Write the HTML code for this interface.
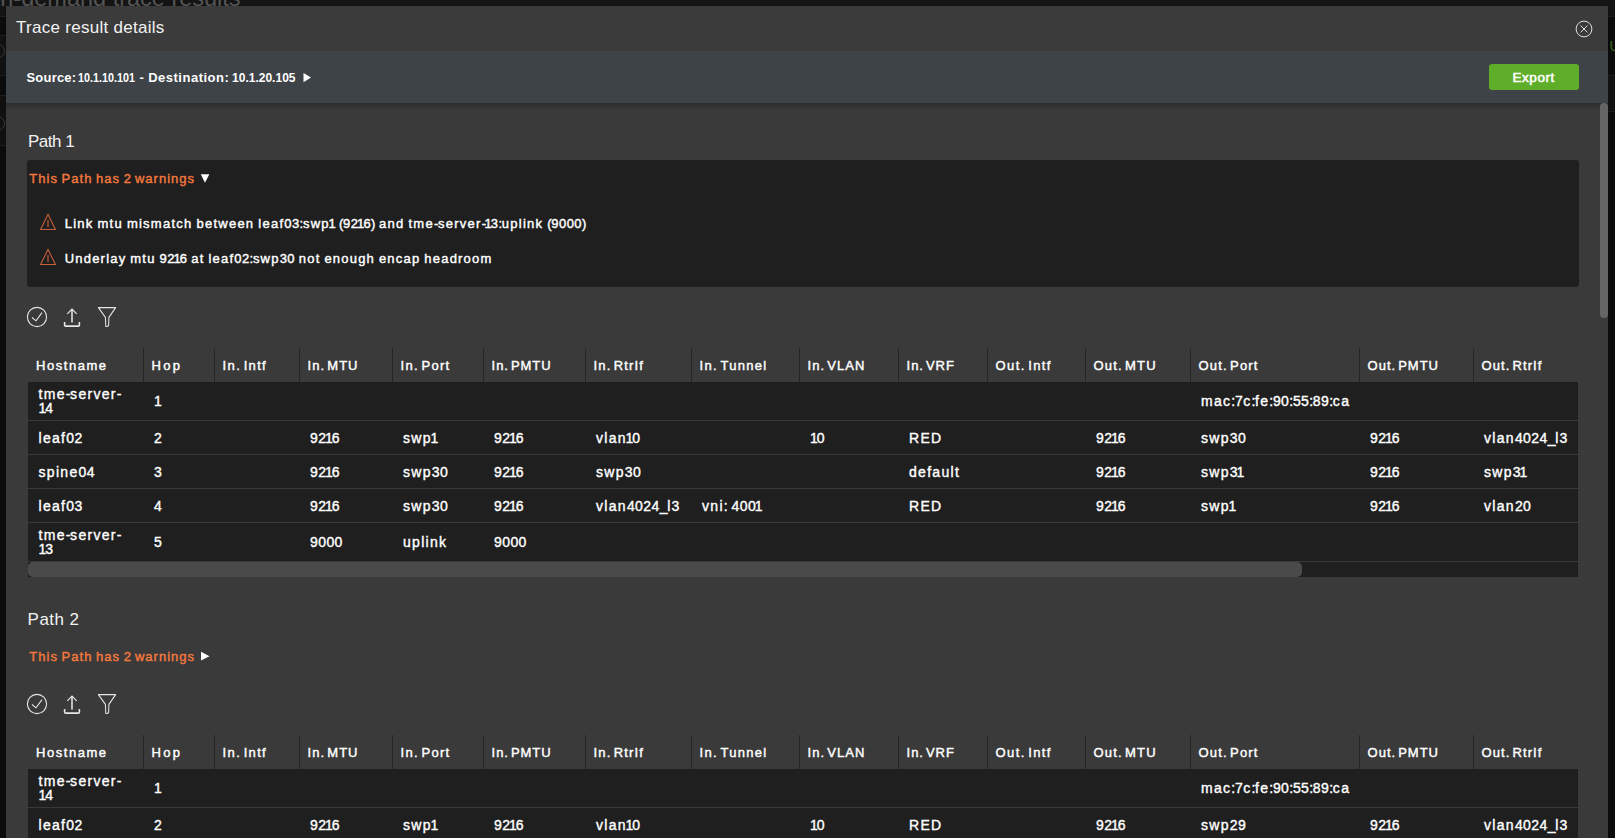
<!DOCTYPE html>
<html><head><meta charset="utf-8"><style>
html,body{margin:0;padding:0;}
body{width:1615px;height:838px;overflow:hidden;background:#0b0b0b;position:relative;font-family:"Liberation Sans",sans-serif;}
.r{position:absolute;}
.t{position:absolute;white-space:nowrap;font-family:"Liberation Sans",sans-serif;}
.clip{position:absolute;overflow:hidden;}
</style></head><body>
<div class="r" style="left:0px;top:0px;width:1615px;height:16px;background:#141414;"></div>
<div class="t" style="left:-18px;top:-13.39px;font-size:23.5px;line-height:23.5px;font-weight:400;color:#555555;">On-demand trace results</div>
<div class="r" style="left:0px;top:35px;width:6px;height:40px;background:#111111;"></div>
<div class="r" style="left:0px;top:95px;width:6px;height:50px;background:#101010;"></div>
<div class="r" style="left:0px;top:16px;width:6px;height:1px;background:#1e1e1e;"></div>
<div class="r" style="left:0px;top:35px;width:6px;height:1px;background:#1e1e1e;"></div>
<div class="r" style="left:0px;top:75px;width:6px;height:1px;background:#1e1e1e;"></div>
<div class="r" style="left:0px;top:95px;width:6px;height:1px;background:#1e1e1e;"></div>
<div class="r" style="left:0px;top:145px;width:6px;height:1px;background:#1e1e1e;"></div>
<div class="r" style="left:-9px;top:44px;width:12px;height:12px;border:1.5px solid #3a3a3a;border-radius:50%"></div>
<div class="r" style="left:-10px;top:116px;width:13px;height:13px;border:1.5px solid #3a3a3a;border-radius:50%"></div>
<div class="r" style="left:1608px;top:75px;width:7px;height:36px;background:#111111;"></div>
<div class="r" style="left:1608px;top:16px;width:7px;height:1px;background:#1e1e1e;"></div>
<div class="r" style="left:1608px;top:75px;width:7px;height:1px;background:#1e1e1e;"></div>
<div class="r" style="left:1608px;top:111px;width:7px;height:1px;background:#1e1e1e;"></div>
<div class="t" style="left:1609.5px;top:39.15px;font-size:14px;line-height:14px;font-weight:400;color:#356b1c;">U</div>
<div class="r" style="left:6px;top:6px;width:1602px;height:840px;background:#3a3a3a;"></div>
<div class="r" style="left:6px;top:6px;width:1602px;height:45px;background:#3b3b3b;box-shadow:0 1px 2px rgba(0,0,0,0.35);"></div>
<div class="t" style="left:16px;top:19.41px;font-size:17px;line-height:17px;font-weight:400;color:#f2f2f2;letter-spacing:0.28px;">Trace result details</div>
<svg class="r" style="left:1572px;top:17px" width="24" height="24" viewBox="1572 17 24 24">
<circle cx="1584" cy="29" r="7.9" fill="none" stroke="#e0e0e0" stroke-width="1"/>
<line x1="1580.6" y1="25.6" x2="1587.4" y2="32.4" stroke="#e0e0e0" stroke-width="1"/>
<line x1="1587.4" y1="25.6" x2="1580.6" y2="32.4" stroke="#e0e0e0" stroke-width="1"/>
</svg>
<div class="r" style="left:6px;top:103px;width:1602px;height:8px;background:linear-gradient(rgba(0,0,0,0.22),rgba(0,0,0,0));"></div>
<div class="r" style="left:6px;top:51px;width:1602px;height:52px;background:#3e4347;"></div>
<div class="t" style="left:26.5px;top:71.00px;font-size:13px;line-height:13px;font-weight:700;color:#ffffff;letter-spacing:0.2px;">Source:</div>
<div class="t" style="left:78.2px;top:71.00px;font-size:13px;line-height:13px;font-weight:700;color:#ffffff;"><span style="display:inline-block;transform:scaleX(0.83);transform-origin:0 0">10.1.10.101</span></div>
<div class="t" style="left:139.5px;top:71.00px;font-size:13px;line-height:13px;font-weight:700;color:#ffffff;">-</div>
<div class="t" style="left:148.2px;top:71.00px;font-size:13px;line-height:13px;font-weight:700;color:#ffffff;letter-spacing:0.5px;">Destination:</div>
<div class="t" style="left:231.5px;top:71.00px;font-size:13px;line-height:13px;font-weight:700;color:#ffffff;"><span style="display:inline-block;transform:scaleX(0.925);transform-origin:0 0">10.1.20.105</span></div>
<svg class="r" style="left:302px;top:72px" width="10" height="12" viewBox="302 72 10 12"><polygon points="303.5,73 311,77.6 303.5,82.2" fill="#fff"/></svg>
<div class="r" style="left:1489px;top:64px;width:90px;height:26px;background:#5eae2a;border-radius:3px;"></div>
<div class="t" style="left:1512.5px;top:70.77px;font-size:13.5px;line-height:13.5px;font-weight:400;color:#ffffff;letter-spacing:0.55px;-webkit-text-stroke:0.55px #ffffff;">Export</div>
<div class="r" style="left:1600px;top:103px;width:8px;height:215px;background:#656565;border-radius:4px;"></div>
<div class="t" style="left:27.9px;top:132.61px;font-size:17px;line-height:17px;font-weight:400;color:#f2f2f2;letter-spacing:-0.45px;">Path 1</div>
<div class="r" style="left:27px;top:160px;width:1552px;height:127px;background:#1f1f1f;border-radius:3px;"></div>
<div class="t" style="left:29.3px;top:171.60px;font-size:13px;line-height:13px;font-weight:400;color:#f5793d;-webkit-text-stroke:0.4px #f5793d;"><span style="letter-spacing:1.01px">This</span><span style="letter-spacing:0.09px"> </span><span style="letter-spacing:1.01px">Path</span><span style="letter-spacing:0.09px"> </span><span style="letter-spacing:1.01px">has</span><span style="letter-spacing:0.09px"> </span><span style="letter-spacing:0.18px">2</span><span style="letter-spacing:0.09px"> </span><span style="letter-spacing:1.01px">warnings</span></div>
<svg class="r" style="left:199px;top:172px" width="12" height="12" viewBox="199 172 12 12"><polygon points="200.8,174.2 209.3,174.2 205,182.8" fill="#fff"/></svg>
<svg class="r" style="left:38px;top:212px" width="20" height="20" viewBox="38 212 20 20">
<path d="M48,214.3 L55.4,229.5 L40.6,229.5 Z" fill="none" stroke="#c9623a" stroke-width="1.05" stroke-linejoin="round"/>
<line x1="48" y1="220" x2="48" y2="227.3" stroke="#b35834" stroke-width="1.35"/>
</svg>
<svg class="r" style="left:38px;top:247px" width="20" height="20" viewBox="38 247 20 20">
<path d="M48,249.3 L55.4,264.5 L40.6,264.5 Z" fill="none" stroke="#c9623a" stroke-width="1.05" stroke-linejoin="round"/>
<line x1="48" y1="255" x2="48" y2="262.3" stroke="#b35834" stroke-width="1.35"/>
</svg>
<div class="t" style="left:64.7px;top:217.20px;font-size:13px;line-height:13px;font-weight:400;color:#ffffff;-webkit-text-stroke:0.42px #ffffff;"><span style="letter-spacing:1.25px">Link</span><span style="letter-spacing:0.33px"> </span><span style="letter-spacing:1.25px">mtu</span><span style="letter-spacing:0.33px"> </span><span style="letter-spacing:1.25px">mismatch</span><span style="letter-spacing:0.33px"> </span><span style="letter-spacing:1.25px">between</span><span style="letter-spacing:0.33px"> </span><span style="letter-spacing:1.25px">leaf</span><span style="letter-spacing:0.42px">03</span><span style="letter-spacing:-0.25px">:</span><span style="letter-spacing:1.25px">sw</span><span style="letter-spacing:-0.05px">p</span><span style="letter-spacing:-0.85px">1</span><span style="letter-spacing:0.33px"> </span><span style="letter-spacing:-0.25px">(</span><span style="letter-spacing:0.42px">9</span><span style="letter-spacing:-0.88px">2</span><span style="letter-spacing:-0.85px">1</span><span style="letter-spacing:0.42px">6</span><span style="letter-spacing:-0.25px">)</span><span style="letter-spacing:0.33px"> </span><span style="letter-spacing:1.25px">and</span><span style="letter-spacing:0.33px"> </span><span style="letter-spacing:1.25px">tme</span><span style="letter-spacing:-0.25px">-</span><span style="letter-spacing:1.25px">server</span><span style="letter-spacing:-1.55px">-</span><span style="letter-spacing:-0.85px">1</span><span style="letter-spacing:0.42px">3</span><span style="letter-spacing:-0.25px">:</span><span style="letter-spacing:1.25px">uplink</span><span style="letter-spacing:0.33px"> </span><span style="letter-spacing:-0.25px">(</span><span style="letter-spacing:0.42px">9000</span><span style="letter-spacing:-0.25px">)</span></div>
<div class="t" style="left:64.7px;top:252.00px;font-size:13px;line-height:13px;font-weight:400;color:#ffffff;-webkit-text-stroke:0.42px #ffffff;"><span style="letter-spacing:1.21px">Underlay</span><span style="letter-spacing:0.29px"> </span><span style="letter-spacing:1.21px">mtu</span><span style="letter-spacing:0.29px"> </span><span style="letter-spacing:0.38px">9</span><span style="letter-spacing:-0.92px">2</span><span style="letter-spacing:-0.90px">1</span><span style="letter-spacing:0.38px">6</span><span style="letter-spacing:0.29px"> </span><span style="letter-spacing:1.21px">at</span><span style="letter-spacing:0.29px"> </span><span style="letter-spacing:1.21px">leaf</span><span style="letter-spacing:0.38px">02</span><span style="letter-spacing:-0.30px">:</span><span style="letter-spacing:1.21px">swp</span><span style="letter-spacing:0.38px">30</span><span style="letter-spacing:0.29px"> </span><span style="letter-spacing:1.21px">not</span><span style="letter-spacing:0.29px"> </span><span style="letter-spacing:1.21px">enough</span><span style="letter-spacing:0.29px"> </span><span style="letter-spacing:1.21px">encap</span><span style="letter-spacing:0.29px"> </span><span style="letter-spacing:1.21px">headroom</span></div>
<svg class="r" style="left:20px;top:300px" width="110" height="34" viewBox="20 300 110 34">
<circle cx="37" cy="317" r="9.6" fill="none" stroke="#e6e6e6" stroke-width="1.1"/>
<polyline points="32,317.5 36,320.8 42,312.7" fill="none" stroke="#e6e6e6" stroke-width="1.1"/>
<polyline points="67.3,313.8 72,309 76.7,313.8" fill="none" stroke="#e6e6e6" stroke-width="1.2"/>
<line x1="72" y1="309.4" x2="72" y2="322.5" stroke="#ffffff" stroke-width="1.35"/>
<path d="M64.6,322 L64.6,325 Q64.6,326.1 65.8,326.1 L78.2,326.1 Q79.4,326.1 79.4,325 L79.4,322" fill="none" stroke="#e6e6e6" stroke-width="1.6"/>
<path d="M98.4,307.6 L115.6,307.6 L108.9,317.4 L108.6,325.4 Q107.6,327 105.8,326.4 L105.4,317.4 Z" fill="none" stroke="#e6e6e6" stroke-width="1.05" stroke-linejoin="round"/>
</svg>
<div class="clip" style="left:0;top:0;width:1578px;height:838px;"><div class="r" style="left:143px;top:348px;width:1px;height:34px;background:#262626;"></div>
<div class="r" style="left:214px;top:348px;width:1px;height:34px;background:#262626;"></div>
<div class="r" style="left:299px;top:348px;width:1px;height:34px;background:#262626;"></div>
<div class="r" style="left:392px;top:348px;width:1px;height:34px;background:#262626;"></div>
<div class="r" style="left:483px;top:348px;width:1px;height:34px;background:#262626;"></div>
<div class="r" style="left:585px;top:348px;width:1px;height:34px;background:#262626;"></div>
<div class="r" style="left:691px;top:348px;width:1px;height:34px;background:#262626;"></div>
<div class="r" style="left:799px;top:348px;width:1px;height:34px;background:#262626;"></div>
<div class="r" style="left:898px;top:348px;width:1px;height:34px;background:#262626;"></div>
<div class="r" style="left:987px;top:348px;width:1px;height:34px;background:#262626;"></div>
<div class="r" style="left:1085px;top:348px;width:1px;height:34px;background:#262626;"></div>
<div class="r" style="left:1190px;top:348px;width:1px;height:34px;background:#262626;"></div>
<div class="r" style="left:1359px;top:348px;width:1px;height:34px;background:#262626;"></div>
<div class="r" style="left:1473px;top:348px;width:1px;height:34px;background:#262626;"></div>
<div class="t" style="left:36.0px;top:359.00px;font-size:13px;line-height:13px;font-weight:400;color:#ffffff;-webkit-text-stroke:0.42px #ffffff;"><span style="letter-spacing:1.55px">Hostname</span></div>
<div class="t" style="left:151.6px;top:359.00px;font-size:13px;line-height:13px;font-weight:400;color:#ffffff;-webkit-text-stroke:0.42px #ffffff;"><span style="letter-spacing:2.31px">Hop</span></div>
<div class="t" style="left:222.6px;top:359.00px;font-size:13px;line-height:13px;font-weight:400;color:#ffffff;-webkit-text-stroke:0.42px #ffffff;"><span style="letter-spacing:1.34px">In</span><span style="letter-spacing:-0.17px">.</span><span style="letter-spacing:0.42px"> </span><span style="letter-spacing:1.34px">Intf</span></div>
<div class="t" style="left:307.6px;top:359.00px;font-size:13px;line-height:13px;font-weight:400;color:#ffffff;-webkit-text-stroke:0.42px #ffffff;"><span style="letter-spacing:1.01px">In</span><span style="letter-spacing:-0.50px">.</span><span style="letter-spacing:0.09px"> </span><span style="letter-spacing:1.01px">MTU</span></div>
<div class="t" style="left:400.6px;top:359.00px;font-size:13px;line-height:13px;font-weight:400;color:#ffffff;-webkit-text-stroke:0.42px #ffffff;"><span style="letter-spacing:1.30px">In</span><span style="letter-spacing:-0.21px">.</span><span style="letter-spacing:0.38px"> </span><span style="letter-spacing:1.30px">Port</span></div>
<div class="t" style="left:491.6px;top:359.00px;font-size:13px;line-height:13px;font-weight:400;color:#ffffff;-webkit-text-stroke:0.42px #ffffff;"><span style="letter-spacing:0.93px">In</span><span style="letter-spacing:-0.58px">.</span><span style="letter-spacing:0.01px"> </span><span style="letter-spacing:0.93px">PMTU</span></div>
<div class="t" style="left:593.6px;top:359.00px;font-size:13px;line-height:13px;font-weight:400;color:#ffffff;-webkit-text-stroke:0.42px #ffffff;"><span style="letter-spacing:1.13px">In</span><span style="letter-spacing:-0.38px">.</span><span style="letter-spacing:0.21px"> </span><span style="letter-spacing:1.13px">RtrIf</span></div>
<div class="t" style="left:699.6px;top:359.00px;font-size:13px;line-height:13px;font-weight:400;color:#ffffff;-webkit-text-stroke:0.42px #ffffff;"><span style="letter-spacing:1.30px">In</span><span style="letter-spacing:-0.21px">.</span><span style="letter-spacing:0.38px"> </span><span style="letter-spacing:1.30px">Tunnel</span></div>
<div class="t" style="left:807.6px;top:359.00px;font-size:13px;line-height:13px;font-weight:400;color:#ffffff;-webkit-text-stroke:0.42px #ffffff;"><span style="letter-spacing:1.02px">In</span><span style="letter-spacing:-0.49px">.</span><span style="letter-spacing:0.10px"> </span><span style="letter-spacing:1.02px">VLAN</span></div>
<div class="t" style="left:906.6px;top:359.00px;font-size:13px;line-height:13px;font-weight:400;color:#ffffff;-webkit-text-stroke:0.42px #ffffff;"><span style="letter-spacing:0.93px">In</span><span style="letter-spacing:-0.58px">.</span><span style="letter-spacing:0.01px"> </span><span style="letter-spacing:0.93px">VRF</span></div>
<div class="t" style="left:995.6px;top:359.00px;font-size:13px;line-height:13px;font-weight:400;color:#ffffff;-webkit-text-stroke:0.42px #ffffff;"><span style="letter-spacing:1.36px">Out</span><span style="letter-spacing:-0.15px">.</span><span style="letter-spacing:0.44px"> </span><span style="letter-spacing:1.36px">Intf</span></div>
<div class="t" style="left:1093.6px;top:359.00px;font-size:13px;line-height:13px;font-weight:400;color:#ffffff;-webkit-text-stroke:0.42px #ffffff;"><span style="letter-spacing:1.15px">Out</span><span style="letter-spacing:-0.36px">.</span><span style="letter-spacing:0.23px"> </span><span style="letter-spacing:1.15px">MTU</span></div>
<div class="t" style="left:1198.6px;top:359.00px;font-size:13px;line-height:13px;font-weight:400;color:#ffffff;-webkit-text-stroke:0.42px #ffffff;"><span style="letter-spacing:1.15px">Out</span><span style="letter-spacing:-0.36px">.</span><span style="letter-spacing:0.23px"> </span><span style="letter-spacing:1.15px">Port</span></div>
<div class="t" style="left:1367.6px;top:359.00px;font-size:13px;line-height:13px;font-weight:400;color:#ffffff;-webkit-text-stroke:0.42px #ffffff;"><span style="letter-spacing:0.97px">Out</span><span style="letter-spacing:-0.54px">.</span><span style="letter-spacing:0.05px"> </span><span style="letter-spacing:0.97px">PMTU</span></div>
<div class="t" style="left:1481.6px;top:359.00px;font-size:13px;line-height:13px;font-weight:400;color:#ffffff;-webkit-text-stroke:0.42px #ffffff;"><span style="letter-spacing:1.04px">Out</span><span style="letter-spacing:-0.47px">.</span><span style="letter-spacing:0.12px"> </span><span style="letter-spacing:1.04px">RtrIf</span></div>
<div class="r" style="left:28px;top:382px;width:1550px;height:38px;background:#1f1f1f;"></div>
<div class="r" style="left:28px;top:420px;width:1550px;height:1px;background:#393939;"></div>
<div class="t" style="left:38.5px;top:387.15px;font-size:14px;line-height:14px;font-weight:400;color:#ffffff;-webkit-text-stroke:0.38px #ffffff;"><span style="letter-spacing:1.30px">tme</span><span style="letter-spacing:-0.32px">-</span><span style="letter-spacing:1.30px">server</span><span style="letter-spacing:-0.32px">-</span></div>
<div class="t" style="left:38.5px;top:401.15px;font-size:14px;line-height:14px;font-weight:400;color:#ffffff;-webkit-text-stroke:0.38px #ffffff;"><span style="letter-spacing:-0.97px">1</span><span style="letter-spacing:0.41px">4</span></div>
<div class="t" style="left:154px;top:394.15px;font-size:14px;line-height:14px;font-weight:400;color:#ffffff;-webkit-text-stroke:0.38px #ffffff;"><span style="letter-spacing:-0.97px">1</span></div>
<div class="t" style="left:1201px;top:394.15px;font-size:14px;line-height:14px;font-weight:400;color:#ffffff;-webkit-text-stroke:0.38px #ffffff;"><span style="letter-spacing:1.30px">mac</span><span style="letter-spacing:-0.32px">:</span><span style="letter-spacing:0.41px">7</span><span style="letter-spacing:1.30px">c</span><span style="letter-spacing:-0.32px">:</span><span style="letter-spacing:1.30px">fe</span><span style="letter-spacing:-0.32px">:</span><span style="letter-spacing:0.41px">90</span><span style="letter-spacing:-0.32px">:</span><span style="letter-spacing:0.41px">55</span><span style="letter-spacing:-0.32px">:</span><span style="letter-spacing:0.41px">89</span><span style="letter-spacing:-0.32px">:</span><span style="letter-spacing:1.30px">ca</span></div>
<div class="r" style="left:28px;top:421px;width:1550px;height:33px;background:#1f1f1f;"></div>
<div class="r" style="left:28px;top:454px;width:1550px;height:1px;background:#393939;"></div>
<div class="t" style="left:38.5px;top:430.65px;font-size:14px;line-height:14px;font-weight:400;color:#ffffff;-webkit-text-stroke:0.38px #ffffff;"><span style="letter-spacing:1.30px">leaf</span><span style="letter-spacing:0.41px">02</span></div>
<div class="t" style="left:154px;top:430.65px;font-size:14px;line-height:14px;font-weight:400;color:#ffffff;-webkit-text-stroke:0.38px #ffffff;"><span style="letter-spacing:0.41px">2</span></div>
<div class="t" style="left:310px;top:430.65px;font-size:14px;line-height:14px;font-weight:400;color:#ffffff;-webkit-text-stroke:0.38px #ffffff;"><span style="letter-spacing:0.41px">9</span><span style="letter-spacing:-0.99px">2</span><span style="letter-spacing:-0.97px">1</span><span style="letter-spacing:0.41px">6</span></div>
<div class="t" style="left:403px;top:430.65px;font-size:14px;line-height:14px;font-weight:400;color:#ffffff;-webkit-text-stroke:0.38px #ffffff;"><span style="letter-spacing:1.30px">sw</span><span style="letter-spacing:-0.10px">p</span><span style="letter-spacing:-0.97px">1</span></div>
<div class="t" style="left:494px;top:430.65px;font-size:14px;line-height:14px;font-weight:400;color:#ffffff;-webkit-text-stroke:0.38px #ffffff;"><span style="letter-spacing:0.41px">9</span><span style="letter-spacing:-0.99px">2</span><span style="letter-spacing:-0.97px">1</span><span style="letter-spacing:0.41px">6</span></div>
<div class="t" style="left:596px;top:430.65px;font-size:14px;line-height:14px;font-weight:400;color:#ffffff;-webkit-text-stroke:0.38px #ffffff;"><span style="letter-spacing:1.30px">vla</span><span style="letter-spacing:-0.10px">n</span><span style="letter-spacing:-0.97px">1</span><span style="letter-spacing:0.41px">0</span></div>
<div class="t" style="left:810px;top:430.65px;font-size:14px;line-height:14px;font-weight:400;color:#ffffff;-webkit-text-stroke:0.38px #ffffff;"><span style="letter-spacing:-0.97px">1</span><span style="letter-spacing:0.41px">0</span></div>
<div class="t" style="left:909px;top:430.65px;font-size:14px;line-height:14px;font-weight:400;color:#ffffff;-webkit-text-stroke:0.38px #ffffff;"><span style="letter-spacing:1.30px">RED</span></div>
<div class="t" style="left:1096px;top:430.65px;font-size:14px;line-height:14px;font-weight:400;color:#ffffff;-webkit-text-stroke:0.38px #ffffff;"><span style="letter-spacing:0.41px">9</span><span style="letter-spacing:-0.99px">2</span><span style="letter-spacing:-0.97px">1</span><span style="letter-spacing:0.41px">6</span></div>
<div class="t" style="left:1201px;top:430.65px;font-size:14px;line-height:14px;font-weight:400;color:#ffffff;-webkit-text-stroke:0.38px #ffffff;"><span style="letter-spacing:1.30px">swp</span><span style="letter-spacing:0.41px">30</span></div>
<div class="t" style="left:1370px;top:430.65px;font-size:14px;line-height:14px;font-weight:400;color:#ffffff;-webkit-text-stroke:0.38px #ffffff;"><span style="letter-spacing:0.41px">9</span><span style="letter-spacing:-0.99px">2</span><span style="letter-spacing:-0.97px">1</span><span style="letter-spacing:0.41px">6</span></div>
<div class="t" style="left:1484px;top:430.65px;font-size:14px;line-height:14px;font-weight:400;color:#ffffff;-webkit-text-stroke:0.38px #ffffff;"><span style="letter-spacing:1.30px">vlan</span><span style="letter-spacing:0.41px">4024</span><span style="letter-spacing:-0.32px">_</span><span style="letter-spacing:1.30px">l</span><span style="letter-spacing:0.41px">3</span></div>
<div class="r" style="left:28px;top:455px;width:1550px;height:33px;background:#1f1f1f;"></div>
<div class="r" style="left:28px;top:488px;width:1550px;height:1px;background:#393939;"></div>
<div class="t" style="left:38.5px;top:464.65px;font-size:14px;line-height:14px;font-weight:400;color:#ffffff;-webkit-text-stroke:0.38px #ffffff;"><span style="letter-spacing:1.30px">spine</span><span style="letter-spacing:0.41px">04</span></div>
<div class="t" style="left:154px;top:464.65px;font-size:14px;line-height:14px;font-weight:400;color:#ffffff;-webkit-text-stroke:0.38px #ffffff;"><span style="letter-spacing:0.41px">3</span></div>
<div class="t" style="left:310px;top:464.65px;font-size:14px;line-height:14px;font-weight:400;color:#ffffff;-webkit-text-stroke:0.38px #ffffff;"><span style="letter-spacing:0.41px">9</span><span style="letter-spacing:-0.99px">2</span><span style="letter-spacing:-0.97px">1</span><span style="letter-spacing:0.41px">6</span></div>
<div class="t" style="left:403px;top:464.65px;font-size:14px;line-height:14px;font-weight:400;color:#ffffff;-webkit-text-stroke:0.38px #ffffff;"><span style="letter-spacing:1.30px">swp</span><span style="letter-spacing:0.41px">30</span></div>
<div class="t" style="left:494px;top:464.65px;font-size:14px;line-height:14px;font-weight:400;color:#ffffff;-webkit-text-stroke:0.38px #ffffff;"><span style="letter-spacing:0.41px">9</span><span style="letter-spacing:-0.99px">2</span><span style="letter-spacing:-0.97px">1</span><span style="letter-spacing:0.41px">6</span></div>
<div class="t" style="left:596px;top:464.65px;font-size:14px;line-height:14px;font-weight:400;color:#ffffff;-webkit-text-stroke:0.38px #ffffff;"><span style="letter-spacing:1.30px">swp</span><span style="letter-spacing:0.41px">30</span></div>
<div class="t" style="left:909px;top:464.65px;font-size:14px;line-height:14px;font-weight:400;color:#ffffff;-webkit-text-stroke:0.38px #ffffff;"><span style="letter-spacing:1.30px">default</span></div>
<div class="t" style="left:1096px;top:464.65px;font-size:14px;line-height:14px;font-weight:400;color:#ffffff;-webkit-text-stroke:0.38px #ffffff;"><span style="letter-spacing:0.41px">9</span><span style="letter-spacing:-0.99px">2</span><span style="letter-spacing:-0.97px">1</span><span style="letter-spacing:0.41px">6</span></div>
<div class="t" style="left:1201px;top:464.65px;font-size:14px;line-height:14px;font-weight:400;color:#ffffff;-webkit-text-stroke:0.38px #ffffff;"><span style="letter-spacing:1.30px">swp</span><span style="letter-spacing:-0.99px">3</span><span style="letter-spacing:-0.97px">1</span></div>
<div class="t" style="left:1370px;top:464.65px;font-size:14px;line-height:14px;font-weight:400;color:#ffffff;-webkit-text-stroke:0.38px #ffffff;"><span style="letter-spacing:0.41px">9</span><span style="letter-spacing:-0.99px">2</span><span style="letter-spacing:-0.97px">1</span><span style="letter-spacing:0.41px">6</span></div>
<div class="t" style="left:1484px;top:464.65px;font-size:14px;line-height:14px;font-weight:400;color:#ffffff;-webkit-text-stroke:0.38px #ffffff;"><span style="letter-spacing:1.30px">swp</span><span style="letter-spacing:-0.99px">3</span><span style="letter-spacing:-0.97px">1</span></div>
<div class="r" style="left:28px;top:489px;width:1550px;height:33px;background:#1f1f1f;"></div>
<div class="r" style="left:28px;top:522px;width:1550px;height:1px;background:#393939;"></div>
<div class="t" style="left:38.5px;top:498.65px;font-size:14px;line-height:14px;font-weight:400;color:#ffffff;-webkit-text-stroke:0.38px #ffffff;"><span style="letter-spacing:1.30px">leaf</span><span style="letter-spacing:0.41px">03</span></div>
<div class="t" style="left:154px;top:498.65px;font-size:14px;line-height:14px;font-weight:400;color:#ffffff;-webkit-text-stroke:0.38px #ffffff;"><span style="letter-spacing:0.41px">4</span></div>
<div class="t" style="left:310px;top:498.65px;font-size:14px;line-height:14px;font-weight:400;color:#ffffff;-webkit-text-stroke:0.38px #ffffff;"><span style="letter-spacing:0.41px">9</span><span style="letter-spacing:-0.99px">2</span><span style="letter-spacing:-0.97px">1</span><span style="letter-spacing:0.41px">6</span></div>
<div class="t" style="left:403px;top:498.65px;font-size:14px;line-height:14px;font-weight:400;color:#ffffff;-webkit-text-stroke:0.38px #ffffff;"><span style="letter-spacing:1.30px">swp</span><span style="letter-spacing:0.41px">30</span></div>
<div class="t" style="left:494px;top:498.65px;font-size:14px;line-height:14px;font-weight:400;color:#ffffff;-webkit-text-stroke:0.38px #ffffff;"><span style="letter-spacing:0.41px">9</span><span style="letter-spacing:-0.99px">2</span><span style="letter-spacing:-0.97px">1</span><span style="letter-spacing:0.41px">6</span></div>
<div class="t" style="left:596px;top:498.65px;font-size:14px;line-height:14px;font-weight:400;color:#ffffff;-webkit-text-stroke:0.38px #ffffff;"><span style="letter-spacing:1.30px">vlan</span><span style="letter-spacing:0.41px">4024</span><span style="letter-spacing:-0.32px">_</span><span style="letter-spacing:1.30px">l</span><span style="letter-spacing:0.41px">3</span></div>
<div class="t" style="left:702px;top:498.65px;font-size:14px;line-height:14px;font-weight:400;color:#ffffff;-webkit-text-stroke:0.38px #ffffff;"><span style="letter-spacing:1.30px">vni</span><span style="letter-spacing:-0.32px">:</span><span style="letter-spacing:0.31px"> </span><span style="letter-spacing:0.41px">40</span><span style="letter-spacing:-0.99px">0</span><span style="letter-spacing:-0.97px">1</span></div>
<div class="t" style="left:909px;top:498.65px;font-size:14px;line-height:14px;font-weight:400;color:#ffffff;-webkit-text-stroke:0.38px #ffffff;"><span style="letter-spacing:1.30px">RED</span></div>
<div class="t" style="left:1096px;top:498.65px;font-size:14px;line-height:14px;font-weight:400;color:#ffffff;-webkit-text-stroke:0.38px #ffffff;"><span style="letter-spacing:0.41px">9</span><span style="letter-spacing:-0.99px">2</span><span style="letter-spacing:-0.97px">1</span><span style="letter-spacing:0.41px">6</span></div>
<div class="t" style="left:1201px;top:498.65px;font-size:14px;line-height:14px;font-weight:400;color:#ffffff;-webkit-text-stroke:0.38px #ffffff;"><span style="letter-spacing:1.30px">sw</span><span style="letter-spacing:-0.10px">p</span><span style="letter-spacing:-0.97px">1</span></div>
<div class="t" style="left:1370px;top:498.65px;font-size:14px;line-height:14px;font-weight:400;color:#ffffff;-webkit-text-stroke:0.38px #ffffff;"><span style="letter-spacing:0.41px">9</span><span style="letter-spacing:-0.99px">2</span><span style="letter-spacing:-0.97px">1</span><span style="letter-spacing:0.41px">6</span></div>
<div class="t" style="left:1484px;top:498.65px;font-size:14px;line-height:14px;font-weight:400;color:#ffffff;-webkit-text-stroke:0.38px #ffffff;"><span style="letter-spacing:1.30px">vlan</span><span style="letter-spacing:0.41px">20</span></div>
<div class="r" style="left:28px;top:523px;width:1550px;height:38px;background:#1f1f1f;"></div>
<div class="r" style="left:28px;top:561px;width:1550px;height:1px;background:#393939;"></div>
<div class="t" style="left:38.5px;top:528.15px;font-size:14px;line-height:14px;font-weight:400;color:#ffffff;-webkit-text-stroke:0.38px #ffffff;"><span style="letter-spacing:1.30px">tme</span><span style="letter-spacing:-0.32px">-</span><span style="letter-spacing:1.30px">server</span><span style="letter-spacing:-0.32px">-</span></div>
<div class="t" style="left:38.5px;top:542.15px;font-size:14px;line-height:14px;font-weight:400;color:#ffffff;-webkit-text-stroke:0.38px #ffffff;"><span style="letter-spacing:-0.97px">1</span><span style="letter-spacing:0.41px">3</span></div>
<div class="t" style="left:154px;top:535.15px;font-size:14px;line-height:14px;font-weight:400;color:#ffffff;-webkit-text-stroke:0.38px #ffffff;"><span style="letter-spacing:0.41px">5</span></div>
<div class="t" style="left:310px;top:535.15px;font-size:14px;line-height:14px;font-weight:400;color:#ffffff;-webkit-text-stroke:0.38px #ffffff;"><span style="letter-spacing:0.41px">9000</span></div>
<div class="t" style="left:403px;top:535.15px;font-size:14px;line-height:14px;font-weight:400;color:#ffffff;-webkit-text-stroke:0.38px #ffffff;"><span style="letter-spacing:1.30px">uplink</span></div>
<div class="t" style="left:494px;top:535.15px;font-size:14px;line-height:14px;font-weight:400;color:#ffffff;-webkit-text-stroke:0.38px #ffffff;"><span style="letter-spacing:0.41px">9000</span></div>
</div>
<div class="r" style="left:28px;top:562px;width:1550px;height:15px;background:#1f1f1f;"></div>
<div class="r" style="left:28px;top:562px;width:1274px;height:15px;background:#4a4a4a;border-radius:5px;"></div>
<div class="t" style="left:27.6px;top:610.81px;font-size:17px;line-height:17px;font-weight:400;color:#f2f2f2;letter-spacing:0.45px;">Path 2</div>
<div class="t" style="left:29.3px;top:649.80px;font-size:13px;line-height:13px;font-weight:400;color:#f5793d;-webkit-text-stroke:0.4px #f5793d;"><span style="letter-spacing:1.01px">This</span><span style="letter-spacing:0.09px"> </span><span style="letter-spacing:1.01px">Path</span><span style="letter-spacing:0.09px"> </span><span style="letter-spacing:1.01px">has</span><span style="letter-spacing:0.09px"> </span><span style="letter-spacing:0.18px">2</span><span style="letter-spacing:0.09px"> </span><span style="letter-spacing:1.01px">warnings</span></div>
<svg class="r" style="left:199px;top:650px" width="12" height="12" viewBox="199 650 12 12"><polygon points="201,651.8 209.5,656.2 201,660.6" fill="#fff"/></svg>
<svg class="r" style="left:20px;top:687px" width="110" height="34" viewBox="20 687 110 34">
<circle cx="37" cy="704" r="9.6" fill="none" stroke="#e6e6e6" stroke-width="1.1"/>
<polyline points="32,704.5 36,707.8 42,699.7" fill="none" stroke="#e6e6e6" stroke-width="1.1"/>
<polyline points="67.3,700.8 72,696 76.7,700.8" fill="none" stroke="#e6e6e6" stroke-width="1.2"/>
<line x1="72" y1="696.4" x2="72" y2="709.5" stroke="#ffffff" stroke-width="1.35"/>
<path d="M64.6,709 L64.6,712 Q64.6,713.1 65.8,713.1 L78.2,713.1 Q79.4,713.1 79.4,712 L79.4,709" fill="none" stroke="#e6e6e6" stroke-width="1.6"/>
<path d="M98.4,694.6 L115.6,694.6 L108.9,704.4 L108.6,712.4 Q107.6,714 105.8,713.4 L105.4,704.4 Z" fill="none" stroke="#e6e6e6" stroke-width="1.05" stroke-linejoin="round"/>
</svg>
<div class="clip" style="left:0;top:0;width:1578px;height:838px;"><div class="r" style="left:143px;top:735px;width:1px;height:34px;background:#262626;"></div>
<div class="r" style="left:214px;top:735px;width:1px;height:34px;background:#262626;"></div>
<div class="r" style="left:299px;top:735px;width:1px;height:34px;background:#262626;"></div>
<div class="r" style="left:392px;top:735px;width:1px;height:34px;background:#262626;"></div>
<div class="r" style="left:483px;top:735px;width:1px;height:34px;background:#262626;"></div>
<div class="r" style="left:585px;top:735px;width:1px;height:34px;background:#262626;"></div>
<div class="r" style="left:691px;top:735px;width:1px;height:34px;background:#262626;"></div>
<div class="r" style="left:799px;top:735px;width:1px;height:34px;background:#262626;"></div>
<div class="r" style="left:898px;top:735px;width:1px;height:34px;background:#262626;"></div>
<div class="r" style="left:987px;top:735px;width:1px;height:34px;background:#262626;"></div>
<div class="r" style="left:1085px;top:735px;width:1px;height:34px;background:#262626;"></div>
<div class="r" style="left:1190px;top:735px;width:1px;height:34px;background:#262626;"></div>
<div class="r" style="left:1359px;top:735px;width:1px;height:34px;background:#262626;"></div>
<div class="r" style="left:1473px;top:735px;width:1px;height:34px;background:#262626;"></div>
<div class="t" style="left:36.0px;top:746.00px;font-size:13px;line-height:13px;font-weight:400;color:#ffffff;-webkit-text-stroke:0.42px #ffffff;"><span style="letter-spacing:1.55px">Hostname</span></div>
<div class="t" style="left:151.6px;top:746.00px;font-size:13px;line-height:13px;font-weight:400;color:#ffffff;-webkit-text-stroke:0.42px #ffffff;"><span style="letter-spacing:2.31px">Hop</span></div>
<div class="t" style="left:222.6px;top:746.00px;font-size:13px;line-height:13px;font-weight:400;color:#ffffff;-webkit-text-stroke:0.42px #ffffff;"><span style="letter-spacing:1.34px">In</span><span style="letter-spacing:-0.17px">.</span><span style="letter-spacing:0.42px"> </span><span style="letter-spacing:1.34px">Intf</span></div>
<div class="t" style="left:307.6px;top:746.00px;font-size:13px;line-height:13px;font-weight:400;color:#ffffff;-webkit-text-stroke:0.42px #ffffff;"><span style="letter-spacing:1.01px">In</span><span style="letter-spacing:-0.50px">.</span><span style="letter-spacing:0.09px"> </span><span style="letter-spacing:1.01px">MTU</span></div>
<div class="t" style="left:400.6px;top:746.00px;font-size:13px;line-height:13px;font-weight:400;color:#ffffff;-webkit-text-stroke:0.42px #ffffff;"><span style="letter-spacing:1.30px">In</span><span style="letter-spacing:-0.21px">.</span><span style="letter-spacing:0.38px"> </span><span style="letter-spacing:1.30px">Port</span></div>
<div class="t" style="left:491.6px;top:746.00px;font-size:13px;line-height:13px;font-weight:400;color:#ffffff;-webkit-text-stroke:0.42px #ffffff;"><span style="letter-spacing:0.93px">In</span><span style="letter-spacing:-0.58px">.</span><span style="letter-spacing:0.01px"> </span><span style="letter-spacing:0.93px">PMTU</span></div>
<div class="t" style="left:593.6px;top:746.00px;font-size:13px;line-height:13px;font-weight:400;color:#ffffff;-webkit-text-stroke:0.42px #ffffff;"><span style="letter-spacing:1.13px">In</span><span style="letter-spacing:-0.38px">.</span><span style="letter-spacing:0.21px"> </span><span style="letter-spacing:1.13px">RtrIf</span></div>
<div class="t" style="left:699.6px;top:746.00px;font-size:13px;line-height:13px;font-weight:400;color:#ffffff;-webkit-text-stroke:0.42px #ffffff;"><span style="letter-spacing:1.30px">In</span><span style="letter-spacing:-0.21px">.</span><span style="letter-spacing:0.38px"> </span><span style="letter-spacing:1.30px">Tunnel</span></div>
<div class="t" style="left:807.6px;top:746.00px;font-size:13px;line-height:13px;font-weight:400;color:#ffffff;-webkit-text-stroke:0.42px #ffffff;"><span style="letter-spacing:1.02px">In</span><span style="letter-spacing:-0.49px">.</span><span style="letter-spacing:0.10px"> </span><span style="letter-spacing:1.02px">VLAN</span></div>
<div class="t" style="left:906.6px;top:746.00px;font-size:13px;line-height:13px;font-weight:400;color:#ffffff;-webkit-text-stroke:0.42px #ffffff;"><span style="letter-spacing:0.93px">In</span><span style="letter-spacing:-0.58px">.</span><span style="letter-spacing:0.01px"> </span><span style="letter-spacing:0.93px">VRF</span></div>
<div class="t" style="left:995.6px;top:746.00px;font-size:13px;line-height:13px;font-weight:400;color:#ffffff;-webkit-text-stroke:0.42px #ffffff;"><span style="letter-spacing:1.36px">Out</span><span style="letter-spacing:-0.15px">.</span><span style="letter-spacing:0.44px"> </span><span style="letter-spacing:1.36px">Intf</span></div>
<div class="t" style="left:1093.6px;top:746.00px;font-size:13px;line-height:13px;font-weight:400;color:#ffffff;-webkit-text-stroke:0.42px #ffffff;"><span style="letter-spacing:1.15px">Out</span><span style="letter-spacing:-0.36px">.</span><span style="letter-spacing:0.23px"> </span><span style="letter-spacing:1.15px">MTU</span></div>
<div class="t" style="left:1198.6px;top:746.00px;font-size:13px;line-height:13px;font-weight:400;color:#ffffff;-webkit-text-stroke:0.42px #ffffff;"><span style="letter-spacing:1.15px">Out</span><span style="letter-spacing:-0.36px">.</span><span style="letter-spacing:0.23px"> </span><span style="letter-spacing:1.15px">Port</span></div>
<div class="t" style="left:1367.6px;top:746.00px;font-size:13px;line-height:13px;font-weight:400;color:#ffffff;-webkit-text-stroke:0.42px #ffffff;"><span style="letter-spacing:0.97px">Out</span><span style="letter-spacing:-0.54px">.</span><span style="letter-spacing:0.05px"> </span><span style="letter-spacing:0.97px">PMTU</span></div>
<div class="t" style="left:1481.6px;top:746.00px;font-size:13px;line-height:13px;font-weight:400;color:#ffffff;-webkit-text-stroke:0.42px #ffffff;"><span style="letter-spacing:1.04px">Out</span><span style="letter-spacing:-0.47px">.</span><span style="letter-spacing:0.12px"> </span><span style="letter-spacing:1.04px">RtrIf</span></div>
<div class="r" style="left:28px;top:769px;width:1550px;height:38px;background:#1f1f1f;"></div>
<div class="r" style="left:28px;top:807px;width:1550px;height:1px;background:#393939;"></div>
<div class="t" style="left:38.5px;top:774.15px;font-size:14px;line-height:14px;font-weight:400;color:#ffffff;-webkit-text-stroke:0.38px #ffffff;"><span style="letter-spacing:1.30px">tme</span><span style="letter-spacing:-0.32px">-</span><span style="letter-spacing:1.30px">server</span><span style="letter-spacing:-0.32px">-</span></div>
<div class="t" style="left:38.5px;top:788.15px;font-size:14px;line-height:14px;font-weight:400;color:#ffffff;-webkit-text-stroke:0.38px #ffffff;"><span style="letter-spacing:-0.97px">1</span><span style="letter-spacing:0.41px">4</span></div>
<div class="t" style="left:154px;top:781.15px;font-size:14px;line-height:14px;font-weight:400;color:#ffffff;-webkit-text-stroke:0.38px #ffffff;"><span style="letter-spacing:-0.97px">1</span></div>
<div class="t" style="left:1201px;top:781.15px;font-size:14px;line-height:14px;font-weight:400;color:#ffffff;-webkit-text-stroke:0.38px #ffffff;"><span style="letter-spacing:1.30px">mac</span><span style="letter-spacing:-0.32px">:</span><span style="letter-spacing:0.41px">7</span><span style="letter-spacing:1.30px">c</span><span style="letter-spacing:-0.32px">:</span><span style="letter-spacing:1.30px">fe</span><span style="letter-spacing:-0.32px">:</span><span style="letter-spacing:0.41px">90</span><span style="letter-spacing:-0.32px">:</span><span style="letter-spacing:0.41px">55</span><span style="letter-spacing:-0.32px">:</span><span style="letter-spacing:0.41px">89</span><span style="letter-spacing:-0.32px">:</span><span style="letter-spacing:1.30px">ca</span></div>
<div class="r" style="left:28px;top:808px;width:1550px;height:33px;background:#1f1f1f;"></div>
<div class="r" style="left:28px;top:841px;width:1550px;height:1px;background:#393939;"></div>
<div class="t" style="left:38.5px;top:817.65px;font-size:14px;line-height:14px;font-weight:400;color:#ffffff;-webkit-text-stroke:0.38px #ffffff;"><span style="letter-spacing:1.30px">leaf</span><span style="letter-spacing:0.41px">02</span></div>
<div class="t" style="left:154px;top:817.65px;font-size:14px;line-height:14px;font-weight:400;color:#ffffff;-webkit-text-stroke:0.38px #ffffff;"><span style="letter-spacing:0.41px">2</span></div>
<div class="t" style="left:310px;top:817.65px;font-size:14px;line-height:14px;font-weight:400;color:#ffffff;-webkit-text-stroke:0.38px #ffffff;"><span style="letter-spacing:0.41px">9</span><span style="letter-spacing:-0.99px">2</span><span style="letter-spacing:-0.97px">1</span><span style="letter-spacing:0.41px">6</span></div>
<div class="t" style="left:403px;top:817.65px;font-size:14px;line-height:14px;font-weight:400;color:#ffffff;-webkit-text-stroke:0.38px #ffffff;"><span style="letter-spacing:1.30px">sw</span><span style="letter-spacing:-0.10px">p</span><span style="letter-spacing:-0.97px">1</span></div>
<div class="t" style="left:494px;top:817.65px;font-size:14px;line-height:14px;font-weight:400;color:#ffffff;-webkit-text-stroke:0.38px #ffffff;"><span style="letter-spacing:0.41px">9</span><span style="letter-spacing:-0.99px">2</span><span style="letter-spacing:-0.97px">1</span><span style="letter-spacing:0.41px">6</span></div>
<div class="t" style="left:596px;top:817.65px;font-size:14px;line-height:14px;font-weight:400;color:#ffffff;-webkit-text-stroke:0.38px #ffffff;"><span style="letter-spacing:1.30px">vla</span><span style="letter-spacing:-0.10px">n</span><span style="letter-spacing:-0.97px">1</span><span style="letter-spacing:0.41px">0</span></div>
<div class="t" style="left:810px;top:817.65px;font-size:14px;line-height:14px;font-weight:400;color:#ffffff;-webkit-text-stroke:0.38px #ffffff;"><span style="letter-spacing:-0.97px">1</span><span style="letter-spacing:0.41px">0</span></div>
<div class="t" style="left:909px;top:817.65px;font-size:14px;line-height:14px;font-weight:400;color:#ffffff;-webkit-text-stroke:0.38px #ffffff;"><span style="letter-spacing:1.30px">RED</span></div>
<div class="t" style="left:1096px;top:817.65px;font-size:14px;line-height:14px;font-weight:400;color:#ffffff;-webkit-text-stroke:0.38px #ffffff;"><span style="letter-spacing:0.41px">9</span><span style="letter-spacing:-0.99px">2</span><span style="letter-spacing:-0.97px">1</span><span style="letter-spacing:0.41px">6</span></div>
<div class="t" style="left:1201px;top:817.65px;font-size:14px;line-height:14px;font-weight:400;color:#ffffff;-webkit-text-stroke:0.38px #ffffff;"><span style="letter-spacing:1.30px">swp</span><span style="letter-spacing:0.41px">29</span></div>
<div class="t" style="left:1370px;top:817.65px;font-size:14px;line-height:14px;font-weight:400;color:#ffffff;-webkit-text-stroke:0.38px #ffffff;"><span style="letter-spacing:0.41px">9</span><span style="letter-spacing:-0.99px">2</span><span style="letter-spacing:-0.97px">1</span><span style="letter-spacing:0.41px">6</span></div>
<div class="t" style="left:1484px;top:817.65px;font-size:14px;line-height:14px;font-weight:400;color:#ffffff;-webkit-text-stroke:0.38px #ffffff;"><span style="letter-spacing:1.30px">vlan</span><span style="letter-spacing:0.41px">4024</span><span style="letter-spacing:-0.32px">_</span><span style="letter-spacing:1.30px">l</span><span style="letter-spacing:0.41px">3</span></div>
</div>
</body></html>
